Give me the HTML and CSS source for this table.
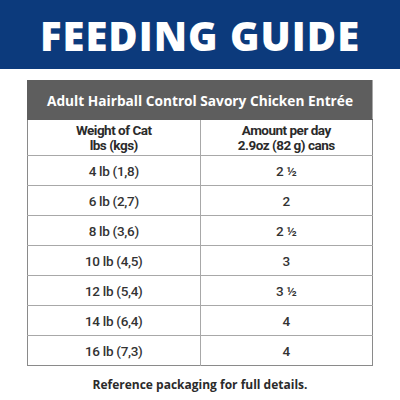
FILE: index.html
```html
<!DOCTYPE html>
<html lang="en">
<head>
  <meta charset="UTF-8">
  <meta name="viewport" content="width=device-width, initial-scale=1.0">
  <link rel="stylesheet" href="styles.css">
  <title>Feeding Guide</title>
</head>
<body>
  <!-- Blue banner -->
  <div class="banner">FEEDING GUIDE</div>

  <div class="guide">
    <table class="feed-table">
      <thead>
        <tr><th colspan="2" class="product">Adult Hairball Control Savory Chicken Entrée</th></tr>
        <tr class="col-titles">
          <th>Weight of Cat<br>lbs (kgs)</th>
          <th>Amount per day<br>2.9oz (82 g) cans</th>
        </tr>
      </thead>
      <tbody>
        <tr><td>4 lb (1,8)</td><td>2 ½</td></tr>
        <tr><td>6 lb (2,7)</td><td>2</td></tr>
        <tr><td>8 lb (3,6)</td><td>2 ½</td></tr>
        <tr><td>10 lb (4,5)</td><td>3</td></tr>
        <tr><td>12 lb (5,4)</td><td>3 ½</td></tr>
        <tr><td>14 lb (6,4)</td><td>4</td></tr>
        <tr><td>16 lb (7,3)</td><td>4</td></tr>
      </tbody>
    </table>
    <p class="note">Reference packaging for full details.</p>
  </div>
</body>
</html>
```

FILE: styles.css
```css
body {
  margin: 0;
  padding: 0;
  background: #fff;
  font-family: "Open Sans", "Liberation Sans", sans-serif;
  color: #2b2b2b;
}

.banner {
  height: 69px;
  background-color: #0c3a7c;
  color: #fff;
  font-weight: 800;
  font-size: 40px;
  line-height: 72px;
  text-align: center;
  letter-spacing: 1px;
}

.guide {
  padding: 11px 27px 0 27px;
}

.feed-table {
  width: 346px;
  border-collapse: collapse;
  border: 1px solid #8a8a8a;
}

.feed-table .product {
  height: 38px;
  padding: 0;
  background-color: #5e5e5e;
  color: #fff;
  font-size: 13.7px;
  font-weight: 700;
  border: 1px solid #5e5e5e;
}

.col-titles th {
  height: 35px;
  padding: 0;
  font-family: Roboto, "Liberation Sans", sans-serif;
  font-size: 13.5px;
  line-height: 15px;
  font-weight: 700;
  letter-spacing: -0.5px;
  color: #2b2b2b;
  width: 50%;
}

.feed-table th,
.feed-table td {
  text-align: center;
  border-top: 1px solid #a8a8a8;
}

.feed-table td {
  height: 29px;
  padding: 0;
  font-family: Roboto, "Liberation Sans", sans-serif;
  font-size: 13.5px;
  font-weight: 500;
  letter-spacing: -0.3px;
  color: #333;
}

.feed-table tr > :first-child {
  border-right: 1px solid #a8a8a8;
}

.feed-table .product {
  border-right: none;
}

.note {
  margin: 10px 0 0 0;
  text-align: center;
  font-size: 12px;
  font-weight: 700;
  color: #2b2b2b;
}
```
